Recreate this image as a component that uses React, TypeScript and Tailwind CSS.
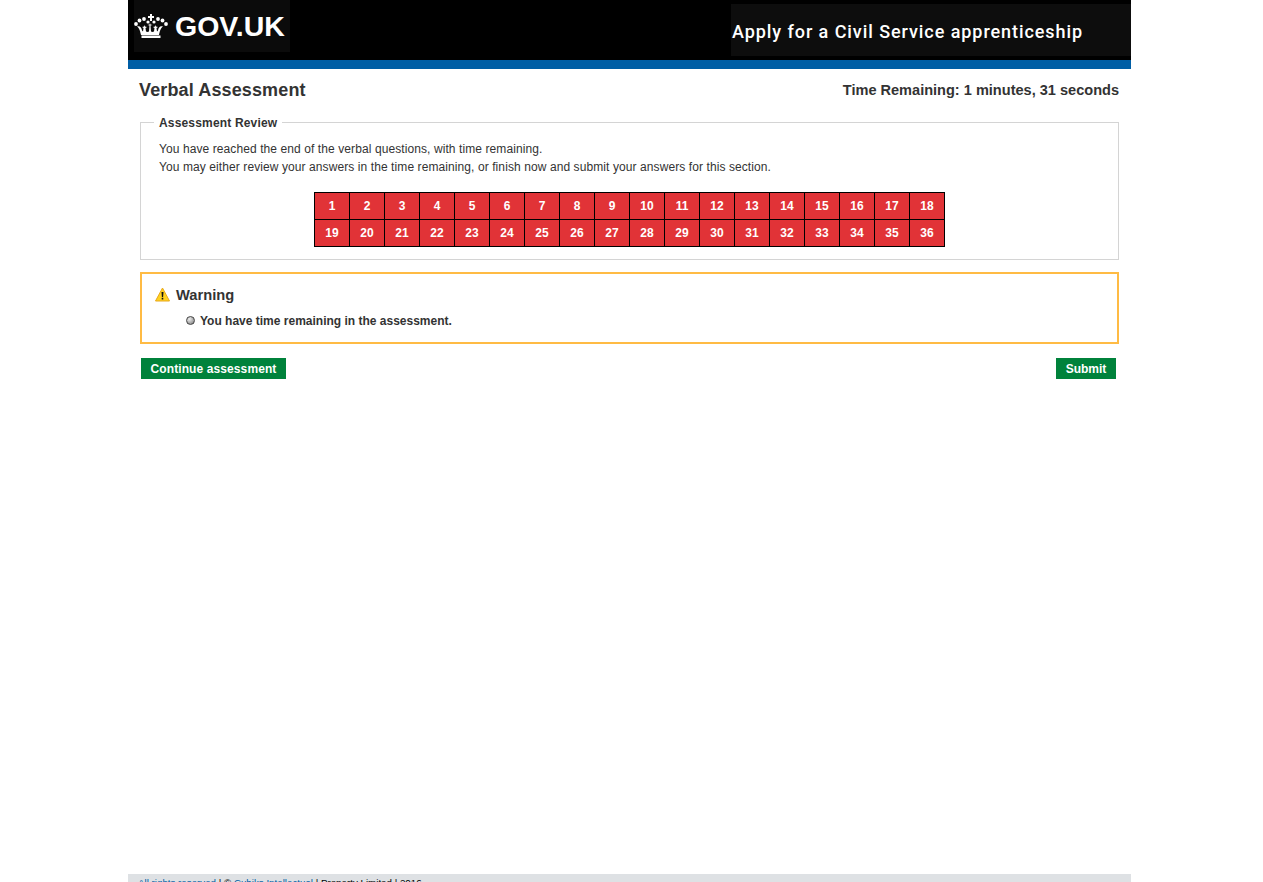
const row1 = Array.from({ length: 36 }, (_, i) => i + 1);

function Crown() {
  return (
    <svg width="34" height="24" viewBox="0 0 34 24" fill="white" aria-hidden="true">
      <path d="M16 0h2v2h2v2h-2v3h-2V4h-2V2h2z" />
      <circle cx="2" cy="10" r="1.900" /><circle cx="5.500" cy="6.500" r="1.900" /><circle cx="10" cy="5" r="1.900" /><circle cx="14" cy="8" r="1.600" />
      <circle cx="20" cy="8" r="1.600" /><circle cx="24" cy="5" r="1.900" /><circle cx="28.500" cy="6.500" r="1.900" /><circle cx="32" cy="10" r="1.900" />
      <path d="M3 12.500c3-1 4.500 1 5 4l1 1 .5-3.500-1.500-1 2-.5.500-1.500.5 1.500 2 .5-1.500 1 .5 3.500 1.500.5 1.500-.5.500-6-2-.5 2-.5.500-1.500.5 1.500 2 .5-2 .5.500 6 1.500.5 1.500-.5.500-3.500-1.500-1 2-.5.500-1.500.5 1.500 2 .5-1.500 1 .5 3.500 1-1c.5-3 2-5 5-4-2 1.500-3 3.500-4 8.500H7c-1-5-2-7-4-8.500z" />
      <path d="M7.500 21.500h19V24h-19z" />
    </svg>
  );
}

export default function App() {
  return (
    <div className="h-[882px] overflow-hidden bg-white font-['Liberation_Sans',Arial,sans-serif] text-[12px] text-[#333]">
      <div className="mx-auto flex h-full w-[1003px] -translate-x-[2px] flex-col">
        <header className="flex h-[69px] shrink-0 items-start justify-between border-b-[9px] border-[#005ea5] bg-black">
          <div className="ml-[6px] flex h-[52px] w-[156px] items-center gap-[7px] bg-[#0b0b0b]">
            <Crown />
            <span className="text-[28.500px] font-bold leading-none text-white">GOV.UK</span>
          </div>
          <div className="mt-[4px] flex h-[52px] w-[400px] items-center bg-[#0d0d0d] pl-[1px] pt-[2px]">
            <span className="font-['Roboto',sans-serif] text-[18px] font-medium tracking-[0.93px] text-white">Apply for a Civil Service apprenticeship</span>
          </div>
        </header>

        <main className="flex-1 px-[12px]">
          <div className="flex h-[40px] items-center justify-between pt-[3px]">
            <h1 className="-ml-px text-[18px] font-bold tracking-[0.13px]">Verbal Assessment</h1>
            <div className="text-[14.55px] font-bold">Time Remaining: 1 minutes, 31 seconds</div>
          </div>

          <fieldset className="mt-[5px] h-[146px] border border-[#d4d4d4] px-[18px]">
            <legend className="-ml-[5px] px-[5px] pt-[2px] text-[12px] font-bold leading-[14px] tracking-[0.17px]">Assessment Review</legend>
            <p className="mt-[10px] leading-[18px] tracking-[0.09px]">
              You have reached the end of the verbal questions, with time remaining.
              <br />
              You may either review your answers in the time remaining, or finish now and submit your answers for this section.
            </p>
            <div className="mt-[16px] flex justify-center">
              <div className="grid grid-cols-[repeat(18,34px)] gap-px bg-black p-px">
                {row1.map((n) => (
                  <div key={n} className="flex h-[26px] items-center justify-center bg-[#e13337] text-[12px] font-bold text-white">
                    {n}
                  </div>
                ))}
              </div>
            </div>
          </fieldset>

          <section className="mt-[12px] h-[72px] border-2 border-[#ffbb44] px-[13px] pt-[11px]">
            <div className="flex items-center gap-[6px]">
              <svg className="-translate-y-px" width="15" height="15" viewBox="0 0 15 15" aria-hidden="true">
                <path d="M7.500 1 14.500 14H.5z" fill="#ffd21f" stroke="#e8a81c" strokeLinejoin="round" />
                <path d="M6.500 5h2l-.4 5H6.900zM6.700 10.800h1.600v1.700H6.700z" fill="#111" />
              </svg>
              <span className="text-[14.7px] font-bold leading-[20px]">Warning</span>
            </div>
            <div className="ml-[31px] mt-[9px] flex items-center gap-[6px]">
              <span className="h-[9px] w-[9px] -translate-y-px rounded-full border border-[#444] bg-[radial-gradient(circle_at_35%_30%,#eee,#777)]" />
              <span className="-ml-px font-bold leading-[14px]">You have time remaining in the assessment.</span>
            </div>
          </section>

          <div className="mt-[14px] flex items-start justify-between pl-px pr-[3px]">
            <button className="h-[21px] w-[145px] bg-[#00823b] text-[12px] font-bold tracking-[0.1px] text-white">Continue assessment</button>
            <button className="h-[21px] w-[60px] bg-[#00823b] text-[12px] font-bold text-white">Submit</button>
          </div>
        </main>

        <footer className="h-[8px] shrink-0 overflow-hidden bg-[#dee1e4] pl-[10px] pt-[3px] text-[9.75px] leading-[12px] text-black">
          <a className="text-[#005ea5]">All rights reserved</a> | © <a className="text-[#005ea5]">Cubiks Intellectual</a> | Property Limited | 2016
        </footer>
      </div>
    </div>
  );
}
